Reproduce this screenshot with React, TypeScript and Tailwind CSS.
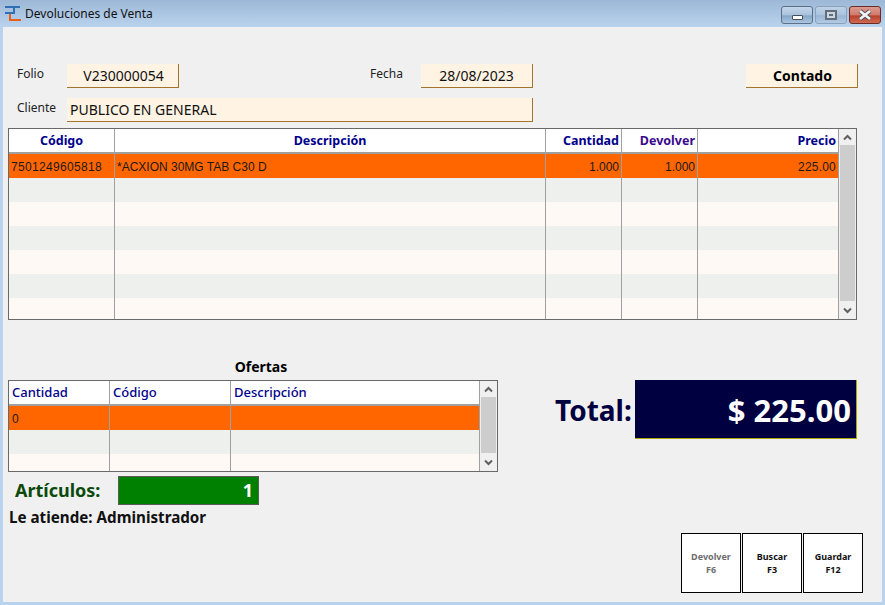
import React from "react";

const tahoma = "font-['Noto_Sans','DejaVu_Sans',sans-serif]";
const arial = "font-['Liberation_Sans',Arial,sans-serif]";

function Logo() {
  return (
    <svg width="17" height="17" viewBox="0 0 17 17" className="shrink-0">
      <path d="M0 1H15V3H10V9H0V7H8V3H0Z" fill="#2f6fb4" />
      <path d="M4 9H6V14H16V16H4Z" fill="#ea5f17" />
    </svg>
  );
}

function WinButtons() {
  return (
    <div className="flex gap-[2px] pt-[6px] pr-[4px]">
      <div className="flex h-[18px] w-[32px] items-center justify-center rounded-[3px] border border-[#5d6f88] bg-[linear-gradient(#c3d6ea_0%,#a9c2dc_50%,#86a5c6_55%,#a9c6e2_100%)]">
        <div className="mt-[4px] h-[5px] w-[11px] rounded-[1px] border border-[#4a4f57] bg-white" />
      </div>
      <div className="flex h-[18px] w-[32px] items-center justify-center rounded-[3px] border border-[#8aa0bb] bg-[linear-gradient(#bdd2e8_0%,#a9c2dc_50%,#98b5d3_55%,#b1cbe6_100%)]">
        <div className="flex h-[10px] w-[12px] items-center justify-center border-2 border-[#666c75] bg-[#c6d6e6]">
          <div className="h-[2px] w-[4px] bg-[#666c75]" />
        </div>
      </div>
      <div className="flex h-[18px] w-[32px] items-center justify-center rounded-[3px] border border-[#6b2a26] bg-[linear-gradient(#dc9a90_0%,#cf7a6c_50%,#b8402c_55%,#d06a50_100%)]">
        <svg width="16" height="12" viewBox="0 0 16 12">
          <path d="M3 2L13 10M13 2L3 10" stroke="#4a4f57" strokeWidth="4.4" />
          <path d="M3 2L13 10M13 2L3 10" stroke="#f2f2f2" strokeWidth="2.8" />
        </svg>
      </div>
    </div>
  );
}

function Chevron({ up }: { up?: boolean }) {
  return (
    <svg width="9" height="7" viewBox="0 0 9 7">
      <path d={up ? "M1 5.5L4.5 2L8 5.5" : "M1 1.5L4.5 5L8 1.5"} fill="none" stroke="#606060" strokeWidth="2" />
    </svg>
  );
}

function ScrollBar({ thumb }: { thumb: string }) {
  return (
    <div className="flex h-full w-[18px] shrink-0 flex-col border-l border-[#a0a0a0] bg-[#f0f0f0]">
      <div className="flex h-[16px] items-center justify-center">
        <Chevron up />
      </div>
      <div className="flex-1 px-px">
        <div className={`w-full bg-[#cdcdcd] ${thumb}`} />
      </div>
      <div className="flex h-[17px] items-center justify-center">
        <Chevron />
      </div>
    </div>
  );
}

type Col = { label: string; align: string; cell: string };

function DataGrid({
  cols,
  template,
  width,
  height,
  headerClass,
  rows,
  thumb,
  rowCount,
}: {
  cols: Col[];
  template: string;
  width: string;
  height: string;
  headerClass: string;
  rows: string[][];
  thumb: string;
  rowCount: number;
}) {
  const blank = Array.from({ length: rowCount }, (_, i) => i);
  return (
    <div className={`flex border border-[#696969] bg-white ${width} ${height}`}>
      <div className="flex min-w-0 flex-1 flex-col overflow-hidden">
        <div className={`grid h-[25px] shrink-0 border-b-2 border-[#a0a0a0] ${template}`}>
          {cols.map((c, i) => (
            <div
              key={c.label}
              className={`flex items-center px-[2px] pt-px text-[#00008b] ${headerClass} ${c.align} ${
                i < cols.length - 1 ? "border-r border-[#a0a0a0]" : ""
              }`}
            >
              {c.label === "Devolver" ? <span className="text-[#3a0a8c]">{c.label}</span> : c.label}
            </div>
          ))}
        </div>
        {blank.map((r) => {
          const bg = r === 0 ? "bg-[#ff6600]" : r % 2 === 1 ? "bg-[#eef0ee]" : "bg-[#fff9f6]";
          return (
            <div key={r} className={`grid h-[24px] shrink-0 ${template} ${bg}`}>
              {cols.map((c, i) => (
                <div
                  key={c.label}
                  className={`flex items-center pt-[2px] text-[12px] text-[#1a1a1a] ${arial} ${c.cell} ${
                    i < cols.length - 1 ? "border-r border-[#a0a0a0]" : ""
                  }`}
                >
                  {rows[r]?.[i] ?? ""}
                </div>
              ))}
            </div>
          );
        })}
      </div>
      <ScrollBar thumb={thumb} />
    </div>
  );
}

function Field({ children, className }: { children: React.ReactNode; className: string }) {
  return (
    <div
      className={`flex h-[24px] items-center border-r border-b border-[#a5742c] bg-[#fff3e3] text-[14px] text-[#111] ${tahoma} ${className}`}
    >
      {children}
    </div>
  );
}

function KeyButton({ top, bottom, muted }: { top: string; bottom: string; muted?: boolean }) {
  return (
    <div
      className={`flex h-[60px] w-[60px] flex-col items-center justify-center border border-black bg-white text-[9px] leading-[13px] font-bold ${tahoma} ${
        muted ? "text-[#6d6d6d]" : "text-[#111]"
      }`}
    >
      <span>{top}</span>
      <span>{bottom}</span>
    </div>
  );
}

export default function App() {
  return (
    <div className="flex h-[605px] w-[885px] flex-col overflow-hidden bg-[#b9d3ee]">
      <div className="flex h-[27px] shrink-0 justify-between bg-[linear-gradient(#9db8d6,#b9d3ee)]">
        <div className={`flex items-center gap-[3px] pl-[5px] text-[12px] text-[#111] ${tahoma}`}>
          <Logo />
          <span>Devoluciones de Venta</span>
        </div>
        <WinButtons />
      </div>

      <div className="mx-[3px] mb-[3px] flex-1 bg-[#f0f0f0]">
        {/* encabezado */}
        <div className="flex pt-[37px]">
          <div className={`w-[64px] pl-[14px] text-[12px] leading-[20px] text-[#222] ${tahoma}`}>Folio</div>
          <Field className="w-[112px] justify-center pl-[2px]">V230000054</Field>
          <div className={`ml-[191px] w-[51px] text-[12px] leading-[20px] text-[#222] ${tahoma}`}>Fecha</div>
          <Field className="w-[112px] justify-center">28/08/2023</Field>
          <Field className="ml-[213px] w-[112px] justify-center pl-[2px] font-bold text-black">Contado</Field>
        </div>
        <div className="mt-[10px] flex">
          <div className={`w-[64px] pl-[14px] text-[12px] leading-[20px] text-[#222] ${tahoma}`}>Cliente</div>
          <Field className="w-[466px] pl-[3px]">PUBLICO EN GENERAL</Field>
        </div>

        {/* detalle */}
        <div className="mt-[6px] pl-[5px]">
          <DataGrid
            width="w-[849px]"
            height="h-[192px]"
            template="grid-cols-[106px_431px_76px_76px_1fr]"
            headerClass={`text-[12.5px] font-bold ${tahoma}`}
            thumb="h-[156px]"
            rowCount={7}
            cols={[
              { label: "Código", align: "justify-center", cell: "pl-[2px] tracking-[0.33px]" },
              { label: "Descripción", align: "justify-center", cell: "pl-[2px]" },
              { label: "Cantidad", align: "justify-end", cell: "justify-end pr-[2px]" },
              { label: "Devolver", align: "justify-end", cell: "justify-end pr-[2px]" },
              { label: "Precio", align: "justify-end", cell: "justify-end pr-[2px] tracking-[0.2px]" },
            ]}
            rows={[["7501249605818", "*ACXION 30MG TAB C30 D", "1.000", "1.000", "225.00"]]}
          />
        </div>

        {/* ofertas y total */}
        <div className="mt-[38px] flex pl-[5px]">
          <div className="w-[490px]">
            <div className={`h-[22px] pl-[16px] text-center text-[14px] leading-[18px] font-bold text-black ${tahoma}`}>Ofertas</div>
            <DataGrid
              width="w-[490px]"
              height="h-[92px]"
              template="grid-cols-[101px_121px_1fr]"
              headerClass={`text-[13px] font-medium ${tahoma}`}
              thumb="h-[56px]"
              rowCount={3}
              cols={[
                { label: "Cantidad", align: "justify-start pl-[3px]", cell: "pl-[3px]" },
                { label: "Código", align: "justify-start pl-[3px]", cell: "pl-[3px]" },
                { label: "Descripción", align: "justify-start pl-[3px]", cell: "pl-[3px]" },
              ]}
              rows={[["0", "", ""]]}
            />
          </div>
          <div className="ml-[57px] flex items-start pt-[22px]">
            <div className={`w-[80px] pt-[10px] text-[28px] leading-[40px] font-bold whitespace-nowrap text-[#000040] ${tahoma}`}>Total:</div>
            <div
              className={`flex h-[59px] w-[222px] items-center justify-end border-r border-b border-[#a8a800] bg-[#000040] pt-[3px] pr-[5px] text-[31px] font-bold text-white ${tahoma}`}
            >
              $ 225.00
            </div>
          </div>
        </div>

        {/* articulos */}
        <div className="mt-[4px] flex items-center pl-[12px]">
          <div className={`w-[103px] text-[18px] font-bold text-[#0b4a0b] ${tahoma}`}>Artículos:</div>
          <div
            className={`flex h-[29px] w-[141px] items-center justify-end border border-[#5a5a5a] bg-[#008000] pr-[5px] text-[18px] font-bold text-white ${tahoma}`}
          >
            1
          </div>
        </div>
        <div className={`pl-[6px] text-[15.2px] leading-[24px] font-bold text-[#111] ${tahoma}`}>Le atiende: Administrador</div>

        {/* acciones */}
        <div className="flex justify-end gap-px pt-[4px] pr-[19px]">
          <KeyButton top="Devolver" bottom="F6" muted />
          <KeyButton top="Buscar" bottom="F3" />
          <KeyButton top="Guardar" bottom="F12" />
        </div>
      </div>
    </div>
  );
}
